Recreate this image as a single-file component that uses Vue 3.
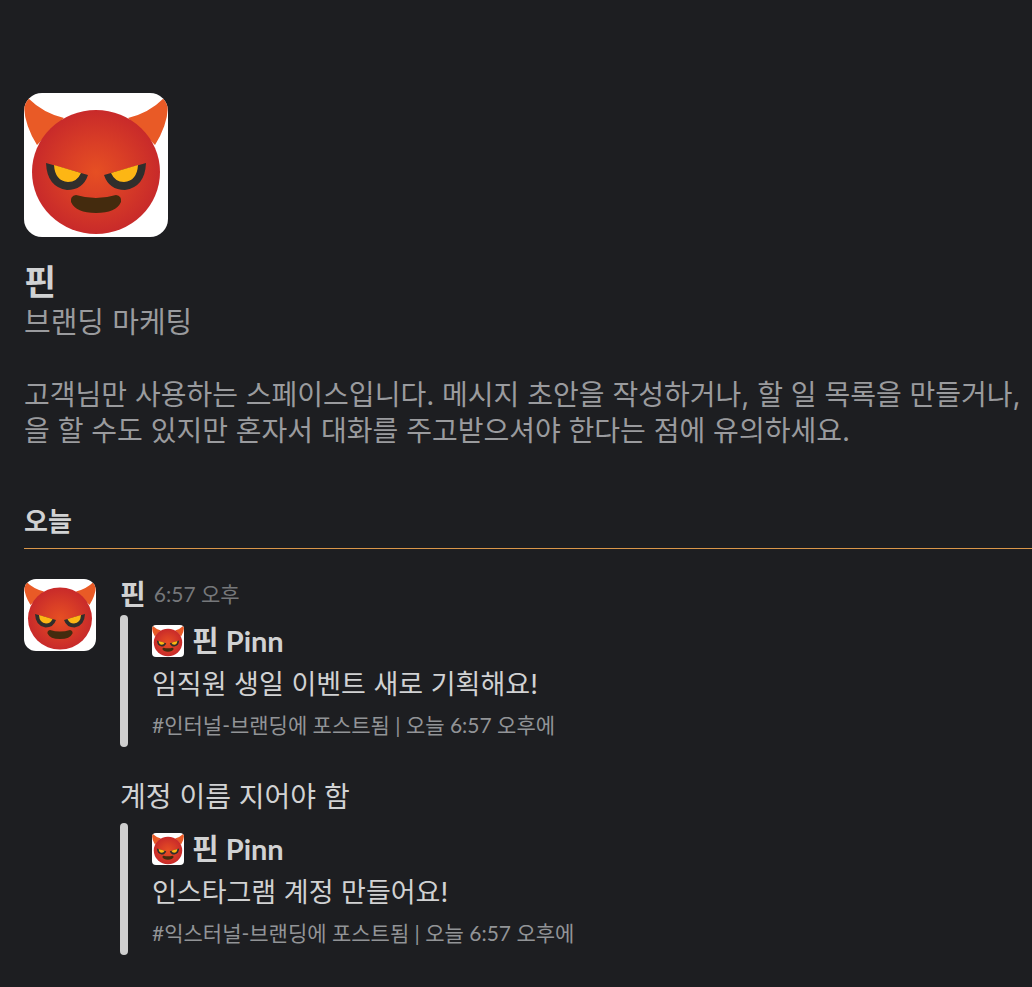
<template>
  <main class="space">
    <section class="profile">
      <svg class="avatar avatar-lg" viewBox="0 0 144 144" role="img" aria-label="핀">
        <use href="#devil" />
      </svg>
      <h1>핀</h1>
      <p class="role">브랜딩 마케팅</p>
      <p class="about">
        <span v-for="line in about" :key="line">{{ line }}</span>
      </p>
    </section>

    <h2 class="day">오늘</h2>

    <article class="message">
      <svg class="avatar avatar-md" viewBox="0 0 144 144" role="img" aria-label="핀">
        <use href="#devil" />
      </svg>
      <div class="message-body">
        <header class="message-head">
          <strong>핀</strong>
          <time>6:57 오후</time>
        </header>
        <template v-for="post in posts" :key="post.id">
          <p v-if="post.note" class="note">{{ post.note }}</p>
          <blockquote class="quote">
            <div class="quote-author">
              <svg class="avatar avatar-sm" viewBox="0 0 144 144" aria-hidden="true">
                <use href="#devil" />
              </svg>
              <strong>핀 Pinn</strong>
            </div>
            <p class="quote-text">{{ post.text }}</p>
            <p class="quote-meta">#{{ post.channel }}에 포스트됨 | 오늘 6:57 오후에</p>
          </blockquote>
        </template>
      </div>
    </article>

    <!-- shared avatar drawing -->
    <svg class="defs" aria-hidden="true">
      <defs>
        <radialGradient id="face" cx="0.5" cy="0.5" r="0.5">
          <stop offset="0" stop-color="#e64f23" />
          <stop offset="0.45" stop-color="#da3f26" />
          <stop offset="1" stop-color="#c82a2a" />
        </radialGradient>
        <g id="devil">
          <rect width="144" height="144" fill="#fff" />
          <path d="M4 5 Q19 20 40 25 L13 52 Q1 33 0 14 Q0 8 4 5Z M140 5 Q125 20 104 25 L131 52 Q143 33 144 14 Q144 8 140 5Z" fill="#e95a26" />
          <ellipse cx="72" cy="79" rx="64" ry="62" fill="url(#face)" />
          <path d="M22 70 L64 82 Q59 97 43 97 Q23 94 22 70Z M122 70 L80 82 Q85 97 101 97 Q121 94 122 70Z" fill="#302e2c" />
          <path d="M30 72 L57 80 Q53 89 44 89 Q31 88 30 72Z M114 72 L87 80 Q91 89 100 89 Q113 88 114 72Z" fill="#fdb614" />
          <path d="M52 102 Q72 108 92 102 Q98 103 97 109 Q92 120 72 120 Q52 120 47 109 Q46 103 52 102Z" fill="#442b0e" />
        </g>
      </defs>
    </svg>
  </main>
</template>

<script setup>
const about = [
  '고객님만 사용하는 스페이스입니다. 메시지 초안을 작성하거나, 할 일 목록을 만들거나,',
  '을 할 수도 있지만 혼자서 대화를 주고받으셔야 한다는 점에 유의하세요.'
]

const posts = [
  { id: 1, note: '', text: '임직원 생일 이벤트 새로 기획해요!', channel: '인터널-브랜딩' },
  { id: 2, note: '계정 이름 지어야 함', text: '인스타그램 계정 만들어요!', channel: '익스터널-브랜딩' }
]
</script>

<style>
body { margin: 0; background: #1d1e21; }
</style>

<style scoped>
.space { min-height: 100vh; box-sizing: border-box; padding: 93px 0 32px 24px; overflow: hidden; font-family: Lato, "Noto Sans CJK KR", sans-serif; font-size: 28px; line-height: 36px; color: #d1d2d3; }
h1, h2, p, blockquote { margin: 0; }
.defs { position: absolute; width: 0; height: 0; }
.avatar { display: block; flex: none; }
.avatar-lg { width: 144px; height: 144px; border-radius: 18px; }
.avatar-md { width: 72px; height: 72px; border-radius: 12px; }
.avatar-sm { width: 32px; height: 32px; border-radius: 4px; }
h1 { margin-top: 24px; font-size: 35px; line-height: 40px; font-weight: 700; }
.role, .about, .note, .quote-text { font-family: Inter, "Noto Sans CJK KR", sans-serif; }
.role, .about { color: #9a9b9e; }
.role { margin-top: 4px; font-size: 29px; }
.about { margin-top: 36px; white-space: nowrap; }
.about span { display: block; }
.day { margin-top: 54px; padding-bottom: 9px; border-bottom: 1px solid #d9964a; font-size: 26px; line-height: 36px; font-weight: 700; }
.message { display: flex; gap: 24px; margin-top: 30px; }
.message-body { flex: 1; min-width: 0; }
.message-head { display: flex; align-items: center; gap: 8px; padding-bottom: 6px; line-height: 30px; }
.message-head time { font-size: 21px; color: #76787b; }
.note { margin-top: 30px; padding-bottom: 6px; line-height: 40px; }
.quote { position: relative; padding: 8px 0 4px 32px; }
.quote::before { content: ""; position: absolute; left: 0; top: 0; bottom: 0; width: 8px; border-radius: 4px; background: #cfcfcf; }
.quote-author { display: flex; align-items: center; gap: 8px; }
.quote-author strong { font-size: 29px; }
.quote-text { margin-top: 4px; font-size: 27px; line-height: 44px; }
.quote-meta { font-size: 21px; line-height: 36px; color: #929497; }
</style>
